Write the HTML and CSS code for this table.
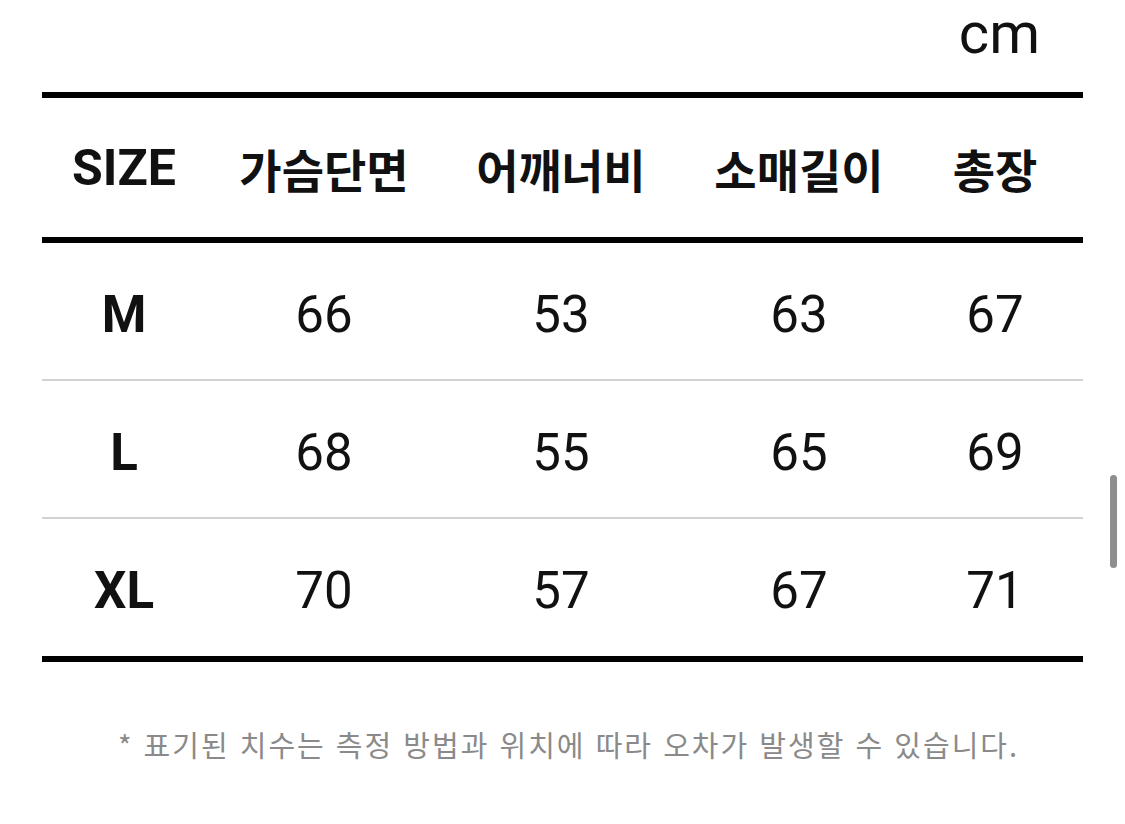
FILE: index.html
```html
<!DOCTYPE html>
<html lang="ko">
<head>
<meta charset="utf-8">
<title>Size chart</title>
<link rel="stylesheet" href="styles.css">
</head>
<body>
<div class="page">
  <div class="unit">cm</div>
  <div class="table">
    <div class="row head">
      <div class="cell latin">SIZE</div>
      <div class="cell">가슴단면</div>
      <div class="cell">어깨너비</div>
      <div class="cell">소매길이</div>
      <div class="cell">총장</div>
    </div>
    <div class="row">
      <div class="cell size">M</div>
      <div class="cell">66</div>
      <div class="cell">53</div>
      <div class="cell">63</div>
      <div class="cell">67</div>
    </div>
    <div class="row">
      <div class="cell size">L</div>
      <div class="cell">68</div>
      <div class="cell">55</div>
      <div class="cell">65</div>
      <div class="cell">69</div>
    </div>
    <div class="row">
      <div class="cell size">XL</div>
      <div class="cell">70</div>
      <div class="cell">57</div>
      <div class="cell">67</div>
      <div class="cell">71</div>
    </div>
  </div>
  <p class="note">* 표기된 치수는 측정 방법과 위치에 따라 오차가 발생할 수 있습니다.</p>
</div>
<div class="scrollbar"></div>
</body>
</html>
```

FILE: styles.css
```css
html, body {
  margin: 0;
  padding: 0;
  background: #ffffff;
}

body {
  font-family: Roboto, "Noto Sans CJK KR", sans-serif;
  color: #111111;
}

.page {
  width: 1041px;
  padding-left: 42px;
}

.unit {
  font-family: Roboto, sans-serif;
  font-weight: 400;
  font-size: 58px;
  line-height: 58px;
  height: 58px;
  padding-top: 4px;
  margin-bottom: 30px;
  padding-right: 43px;
  text-align: right;
  color: #111111;
}

.table {
  border-top: 6px solid #000000;
  border-bottom: 6px solid #000000;
}

.row {
  display: grid;
  grid-template-columns: 164px 236px 238px 238px 154px;
  align-items: center;
  box-sizing: border-box;
  height: 138px;
  padding-right: 11px;
  padding-top: 6px;
  border-bottom: 2px solid #d2d2d2;
  font-size: 51px;
  font-weight: 400;
}

.row:last-child {
  border-bottom: none;
  height: 137px;
}

.row.head {
  height: 145px;
  padding-top: 0;
  border-bottom: 6px solid #000000;
  font-family: Roboto, "Noto Sans CJK KR", sans-serif;
  font-weight: 700;
  font-size: 46px;
}

.cell {
  text-align: center;
  white-space: nowrap;
}

.head .latin {
  font-size: 50px;
}

.size {
  font-weight: 700;
  font-size: 51px;
}

.note {
  margin: 62px 0 0 0;
  font-family: "Noto Sans CJK KR", sans-serif;
  font-size: 29px;
  line-height: 40px;
  color: #8a8a8a;
  text-align: center;
  letter-spacing: 2px;
  padding-left: 12px;
}

.scrollbar {
  position: fixed;
  left: 1110px;
  top: 475px;
  width: 7px;
  height: 93px;
  border-radius: 4px;
  background: #8e8e8e;
}
```
